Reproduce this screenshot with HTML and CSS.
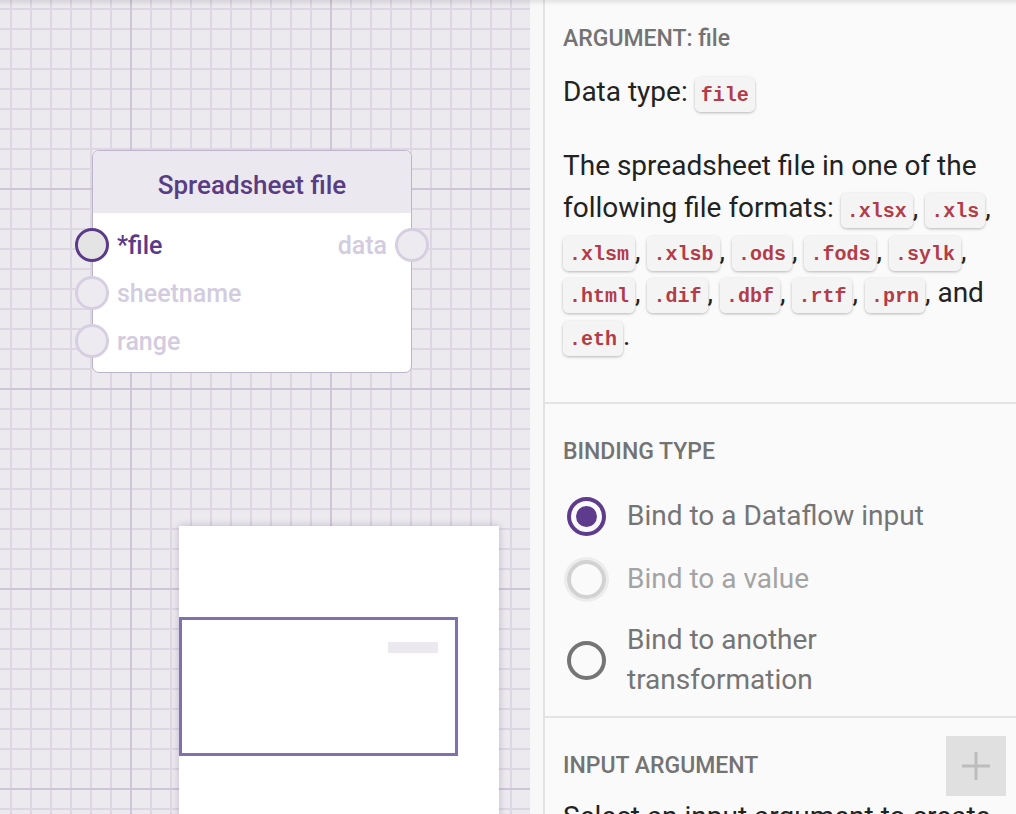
FILE: index.html
```html
<!DOCTYPE html>
<html lang="en">
<head>
<meta charset="utf-8">
<title>Dataflow editor</title>
<link rel="stylesheet" href="styles.css">
</head>
<body>
<div class="app">
  <div class="canvas">
    <div class="node">
      <div class="node-head">Spreadsheet file</div>
      <div class="node-body">
        <div class="node-row">
          <div class="port-in"><span class="port port-active"></span><span class="plabel plabel-active">*file</span></div>
          <div class="port-out"><span class="plabel">data</span><span class="port"></span></div>
        </div>
        <div class="node-row">
          <div class="port-in"><span class="port"></span><span class="plabel">sheetname</span></div>
        </div>
        <div class="node-row">
          <div class="port-in"><span class="port"></span><span class="plabel">range</span></div>
        </div>
      </div>
    </div>
    <div class="minimap">
      <div class="mini-view"></div>
      <div class="mini-node"></div>
    </div>
  </div>
  <div class="splitter"></div>
  <aside class="panel">
    <section class="sec sec-arg">
      <div class="sec-head"><h2>ARGUMENT: file</h2></div>
      <p class="dtype">Data type: <code>file</code></p>
      <p class="desc">The spreadsheet file in one of the following file formats: <code>.xlsx</code>, <code>.xls</code>, <code>.xlsm</code>, <code>.xlsb</code>, <code>.ods</code>, <code>.fods</code>, <code>.sylk</code>, <code>.html</code>, <code>.dif</code>, <code>.dbf</code>, <code>.rtf</code>, <code>.prn</code>, and <code>.eth</code>.</p>
    </section>
    <section class="sec sec-bind">
      <div class="sec-head"><h2>BINDING TYPE</h2></div>
      <div class="radios">
        <div class="radio-row">
          <span class="radio-box"><span class="radio radio-on"></span></span>
          <span class="radio-label">Bind to a Dataflow input</span>
        </div>
        <div class="radio-row disabled">
          <span class="radio-box"><span class="radio radio-dis"></span></span>
          <span class="radio-label">Bind to a value</span>
        </div>
        <div class="radio-row">
          <span class="radio-box"><span class="radio"></span></span>
          <span class="radio-label">Bind to another transformation</span>
        </div>
      </div>
    </section>
    <section class="sec sec-input">
      <div class="sec-head">
        <h2>INPUT ARGUMENT</h2>
        <button class="add-btn" type="button" aria-label="Add">
          <svg width="28" height="28" viewBox="0 0 28 28"><path d="M14 0v28M0 14h28" stroke="#bdbdbd" stroke-width="3" fill="none"/></svg>
        </button>
      </div>
      <p class="desc">Select an input argument to create a binding.</p>
    </section>
  </aside>
  <div class="topshadow"></div>
</div>
</body>
</html>
```

FILE: styles.css
```css
* { box-sizing: border-box; }
html, body { margin: 0; padding: 0; }
body {
  font-family: Roboto, "Noto Sans", "Liberation Sans", sans-serif;
  width: 1016px;
  height: 814px;
  overflow: hidden;
  background: #fafafa;
}
.app {
  position: relative;
  display: flex;
  width: 1016px;
  height: 814px;
  overflow: hidden;
}
.topshadow {
  position: absolute;
  left: 0; top: 0; right: 0;
  height: 6px;
  background: linear-gradient(to bottom, rgba(0,0,0,0.09), rgba(0,0,0,0));
  pointer-events: none;
}

/* ---------- canvas ---------- */
.canvas {
  position: relative;
  flex: 0 0 530px;
  height: 814px;
  overflow: hidden;
  background-color: #ece9ef;
  background-image:
    linear-gradient(to right, #cdc6d6 0 2px, transparent 2px),
    linear-gradient(to bottom, #cdc6d6 0 2px, transparent 2px),
    linear-gradient(to right, #dcd7e3 0 2px, transparent 2px),
    linear-gradient(to bottom, #dcd7e3 0 2px, transparent 2px);
  background-size: 200px 200px, 200px 200px, 20px 20px, 20px 20px;
  background-position: 130px 0, 0 188px, 10px 0, 0 8px;
}
.splitter {
  flex: 0 0 15px;
  background: #f8f8f8;
  border-right: 2px solid #e3e3e3;
}

/* node */
.node {
  position: absolute;
  left: 92px;
  top: 150px;
  width: 320px;
  height: 223px;
  border: 1px solid #bdb4ca;
  border-radius: 7px;
  background: #fff;
}
.node-head {
  height: 62px;
  border-radius: 6px 6px 0 0;
  background: #ebe8ef;
  color: #5a3c82;
  font-size: 26px;
  font-weight: 500;
  display: flex;
  align-items: center;
  justify-content: center;
  padding-top: 6px;
}
.node-body {
  padding: 8px 0;
}
.node-row {
  height: 48px;
  display: flex;
  align-items: center;
  justify-content: space-between;
}
.port-in, .port-out {
  display: flex;
  align-items: center;
  gap: 8px;
}
.port-in { margin-left: -18px; }
.port-out { margin-right: -18px; }
.port {
  width: 34px;
  height: 34px;
  border-radius: 50%;
  border: 3px solid #d6cfe1;
  background: #edebf0;
}
.port-active {
  border-color: #5b3a8a;
  background: #e4e4e4;
}
.plabel {
  font-size: 25px;
  font-weight: 500;
  color: #d3ccdf;
}
.plabel-active { color: #5b3a8a; }

/* minimap */
.minimap {
  position: absolute;
  left: 179px;
  top: 526px;
  width: 320px;
  height: 320px;
  background: #fff;
  box-shadow: 0 0 7px rgba(60, 40, 90, 0.25);
}
.mini-view {
  position: absolute;
  left: 0;
  top: 91px;
  width: 279px;
  height: 139px;
  border: 3px solid #8170ad;
}
.mini-node {
  position: absolute;
  left: 209px;
  top: 116px;
  width: 50px;
  height: 11px;
  background: #ebe8ef;
}

/* ---------- panel ---------- */
.panel {
  flex: 1 1 auto;
  background: #fafafa;
  height: 814px;
  overflow: hidden;
}
.sec {
  padding: 18px 10px 0 18px;
  border-bottom: 2px solid #e3e3e3;
}
.sec-arg { padding-top: 9px; height: 404px; padding-right: 18px; }
.sec-bind { height: 314px; }
.sec-input { border-bottom: none; }
.sec-head {
  height: 60px;
  display: flex;
  align-items: center;
  justify-content: space-between;
}
.sec-head h2 {
  margin: 0;
  font-size: 23px;
  font-weight: 500;
  line-height: 30px;
  color: #737373;
}
.dtype, .desc {
  margin: 0;
  font-size: 28px;
  line-height: 42.5px;
  color: #222;
}
.dtype { margin-top: 2px; }
.sec-arg .desc { margin-top: 31px; }
code {
  font-family: "Liberation Mono", "Courier New", monospace;
  font-weight: 700;
  font-size: 20px;
  line-height: 20px;
  padding: 7px 6px 5px;
  color: #b33c48;
  background: #f4f4f4;
  border-radius: 6px;
  box-shadow: 0 1px 3px rgba(0, 0, 0, 0.28);
  white-space: nowrap;
}

/* radios */
.radios { margin-top: 3px; }
.radio-row {
  display: flex;
  align-items: center;
  gap: 18px;
  padding: 11px 0;
}
.radio-row.disabled { padding: 12px 0 10px; }
.radio-box {
  flex: 0 0 46px;
  height: 40px;
  display: flex;
  align-items: center;
  justify-content: center;
}
.radio {
  flex: 0 0 39px;
  width: 39px;
  height: 39px;
  border-radius: 50%;
  border: 4px solid #757575;
  display: flex;
  align-items: center;
  justify-content: center;
}
.radio-on { border-color: #5e3b8c; }
.radio-on::after {
  content: "";
  width: 21px;
  height: 21px;
  border-radius: 50%;
  background: #5e3b8c;
}
.radio-dis {
  border-color: #d2d2d2;
  box-shadow: 0 0 0 3px #ececec;
}
.radio-label {
  font-size: 28px;
  line-height: 40px;
  color: #757575;
  max-width: 330px;
}
.disabled .radio-label { color: #a3a3a3; }

/* add button */
.add-btn {
  width: 60px;
  height: 60px;
  border: none;
  padding: 0;
  background: #e0e0e0;
  display: flex;
  align-items: center;
  justify-content: center;
}
.add-btn svg { display: block; }
```
